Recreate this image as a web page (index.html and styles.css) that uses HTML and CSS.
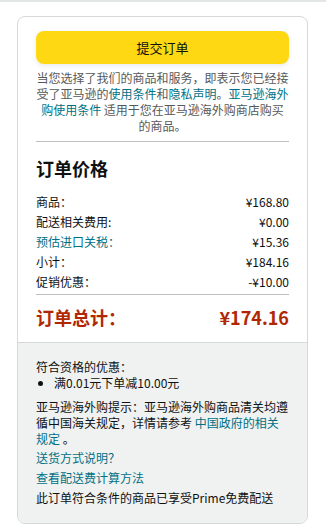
FILE: index.html
```html
<!DOCTYPE html>
<html lang="zh-CN">
<head>
  <meta charset="UTF-8">
  <title>提交订单</title>
  <link rel="stylesheet" href="styles.css">
</head>
<body>

<div class="top-line"></div>

<div class="order-box">
  <div class="order-main">
    <button class="place-btn">提交订单</button>
    <p class="legal">当您选择了我们的商品和服务，即表示您已经接受了亚马逊的<a href="#">使用条件</a>和<a href="#">隐私声明</a>。<a href="#">亚马逊海外购使用条件</a> 适用于您在亚马逊海外购商店购买的商品。</p>

    <hr class="divider">

    <h2 class="summary-title">订单价格</h2>
    <div class="row"><span>商品：</span><span>¥168.80</span></div>
    <div class="row"><span>配送相关费用:</span><span>¥0.00</span></div>
    <div class="row"><a href="#">预估进口关税：</a><span>¥15.36</span></div>
    <div class="row"><span>小计：</span><span>¥184.16</span></div>
    <div class="row"><span>促销优惠：</span><span>-¥10.00</span></div>

    <hr class="divider tight">

    <div class="row total"><span>订单总计：</span><span>¥174.16</span></div>
  </div>

  <div class="order-notes">
    <div class="promo-title">符合资格的优惠：</div>
    <ul class="promo-list">
      <li>满0.01元下单减10.00元</li>
    </ul>
    <p class="customs">亚马逊海外购提示：亚马逊海外购商品清关均遵循中国海关规定，详情请参考 <a href="#">中国政府的相关规定</a> 。</p>
    <a class="note-link" href="#">送货方式说明？</a>
    <a class="note-link" href="#">查看配送费计算方法</a>
    <div class="prime-note">此订单符合条件的商品已享受Prime免费配送</div>
  </div>
</div>

</body>
</html>
```

FILE: styles.css
```css
html, body {
  margin: 0;
  padding: 0;
  background-color: #ffffff;
  font-family: "Noto Sans CJK SC", "Noto Sans", sans-serif;
  color: #0f1111;
}

a {
  color: #007185;
  text-decoration: none;
}

.top-line {
  height: 2px;
  background-color: #e3e6e6;
}

.order-box {
  margin: 14px 18px 0 17px;
  border: 1px solid #d5d9d9;
  border-radius: 8px;
  overflow: hidden;
}

.order-main {
  padding: 14px 18px 13px;
}

.place-btn {
  display: block;
  width: 100%;
  height: 33px;
  border: none;
  border-radius: 8px;
  background-color: #ffd814;
  box-shadow: 0 2px 5px rgba(213, 217, 217, 0.5);
  font-family: inherit;
  font-size: 13px;
  color: #0f1111;
  cursor: pointer;
}

.legal {
  margin: 6px 0 0;
  font-size: 12px;
  line-height: 16px;
  color: #565959;
  text-align: center;
}

.divider {
  border: none;
  border-top: 1px solid #bbbfbf;
  margin: 7px 0 0;
}

.divider.tight {
  margin-top: 2px;
}

.summary-title {
  margin: 14px 0 12px;
  font-size: 18px;
  line-height: 24px;
  font-weight: 700;
}

.row {
  display: flex;
  justify-content: space-between;
  font-size: 12px;
  line-height: 20px;
}

.row.total {
  margin-top: 10px;
  font-size: 18px;
  line-height: 24px;
  font-weight: 700;
  color: #b12704;
}

.order-notes {
  background-color: #f0f2f2;
  border-top: 1px solid #d5d9d9;
  padding: 16px 17px 15px 18px;
  font-size: 12px;
  line-height: 16px;
}

.promo-list {
  margin: 0;
  padding-left: 18px;
}

.customs {
  margin: 8px 0 0;
}

.note-link {
  display: block;
  line-height: 20px;
}

.customs + .note-link {
  margin-top: 1px;
}

.prime-note {
  line-height: 20px;
}
```
